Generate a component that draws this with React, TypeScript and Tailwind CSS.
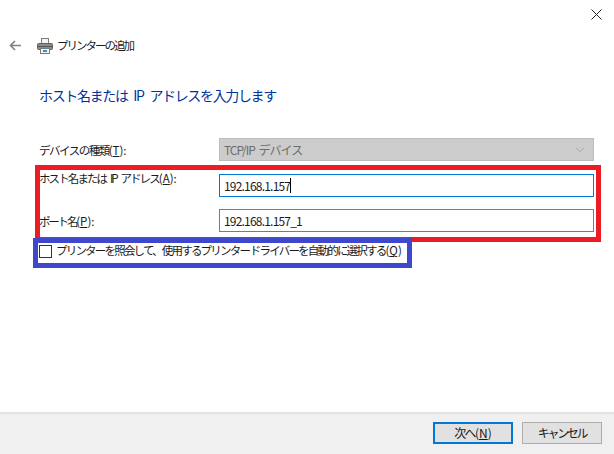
import { ChevronDown } from "lucide-react";

const font = "font-['Noto_Sans_CJK_JP','Noto_Sans',sans-serif]";

function PrinterIcon() {
  return (
    <svg width="16" height="16" viewBox="0 0 16 16">
      <rect x="4.5" y="0.5" width="7" height="5" fill="#f4f4f4" stroke="#7a7a7a" />
      <rect x="0.5" y="5.5" width="15" height="6" rx="1" fill="#8c8c8c" stroke="#5f5f5f" />
      <rect x="1" y="8" width="14" height="1" fill="#555555" />
      <rect x="3.5" y="10.5" width="9" height="5" fill="#f4f4f4" stroke="#7a7a7a" />
      <rect x="6" y="12" width="4" height="2" fill="#3a8fd0" />
    </svg>
  );
}

function Field({
  label,
  hot,
  labelClass,
  children,
}: {
  label: string;
  hot: string;
  labelClass: string;
  children: React.ReactNode;
}) {
  return (
    <div className="flex h-[23px] items-start">
      <div className={`flex w-[180px] shrink-0 text-[11.5px] leading-[23px] text-[#1a1a1a] ${labelClass}`}>
        <span>{label}</span>
        <span className="tracking-normal">
          (<span className="underline">{hot}</span>):
        </span>
      </div>
      {children}
    </div>
  );
}

export default function App() {
  return (
    <div className={`${font} relative flex h-[454px] w-[614px] flex-col overflow-hidden bg-white`}>
      {/* title bar */}
      <div className="flex h-[17px] justify-end pr-[12px] pt-[9px]">
        <svg width="11" height="11" viewBox="0 0 11 11" stroke="#222222" strokeWidth="1">
          <path d="M0.5 0.5 10.5 10.5M10.5 0.5 0.5 10.5" />
        </svg>
      </div>

      {/* nav */}
      <div className="mt-[20px] flex h-[17px] items-center pl-[9px]">
        <svg width="13" height="11" viewBox="0 0 13 11" fill="none" stroke="#808080" strokeWidth="1.6">
          <path d="M12 5.5H1.5M6 1 1.5 5.5 6 10" />
        </svg>
        <div className="ml-[15px]">
          <PrinterIcon />
        </div>
        <span className="ml-[4px] text-[11.5px] tracking-[-2px] text-[#1a1a1a]">プリンターの追加</span>
      </div>

      <h1 className="mt-[29px] pl-[39px] text-[14px] font-normal leading-[24px] tracking-[-1.35px] text-[#003399] [word-spacing:4px]">
        ホスト名または IP アドレスを入力します
      </h1>

      {/* form */}
      <div className="mt-[31px] flex flex-col pl-[39px] pr-[20px]">
        <Field label="デバイスの種類" hot="T" labelClass="mt-px tracking-[-1.5px]">
          <div className="flex h-[23px] flex-1 items-center justify-between border border-[#bdbdbd] bg-[#cccccc] pl-[4px] pr-[6px] text-[12px] tracking-[-1px] text-[#6d6d6d] [word-spacing:2px]">
            TCP/IP デバイス
            <ChevronDown size={14} strokeWidth={1} className="text-[#8a8a8a]" />
          </div>
        </Field>
        <div className="mt-[13px]">
          <Field
            label="ホスト名または IP アドレス"
            hot="A"
            labelClass="-mt-[7px] tracking-[-1.9px] [word-spacing:3px] whitespace-pre"
          >
            <div className="flex h-[23px] flex-1 items-center border border-[#0078d7] pl-[4px] text-[12px] tracking-[-0.8px] text-[#1a1a1a]">
              192.168.1.157
              <span className="h-[15px] w-px bg-black" />
            </div>
          </Field>
        </div>
        <div className="mt-[12px]">
          <Field label="ポート名" hot="P" labelClass="mt-px tracking-[-2.2px]">
            <div className="flex h-[23px] flex-1 items-center border border-[#7a7a7a] pl-[4px] text-[12px] tracking-[-0.8px] text-[#1a1a1a]">
              192.168.1.157_1
            </div>
          </Field>
        </div>
        <label className="mt-[9px] flex h-[20px] items-center text-[11.5px] text-[#1a1a1a]">
          <span className="mr-[4px] h-[13px] w-[13px] border border-[#333333] bg-white" />
          <span className="tracking-[-1.8px]">プリンターを照会して、使用するプリンター ドライバーを自動的に選択する</span>
          <span>
            (<span className="underline">Q</span>)
          </span>
        </label>
      </div>

      {/* annotations drawn over the dialog */}
      <div className="absolute left-[35px] top-[165px] h-[77px] w-[566px] border-[5px] border-[#ed1c24]" />
      <div className="absolute left-[33px] top-[238px] h-[30px] w-[379px] border-[5px] border-[#3f48cc]" />

      {/* footer */}
      <div className="mt-auto flex h-[42px] items-start justify-end gap-[9px] border-t-2 border-[#e3e3e3] bg-[#f0f0f0] pr-[12px] pt-[8px] text-[12px] text-[#1a1a1a]">
        <button className="h-[22px] w-[80px] border-2 border-[#0078d7] bg-[#e1e1e1] leading-none">
          <span className="tracking-[-1.6px]">次へ</span>(<span className="underline">N</span>)
        </button>
        <button className="h-[22px] w-[80px] border border-[#adadad] bg-[#e1e1e1] tracking-[-2.3px] leading-none">
          キャンセル
        </button>
      </div>
    </div>
  );
}
